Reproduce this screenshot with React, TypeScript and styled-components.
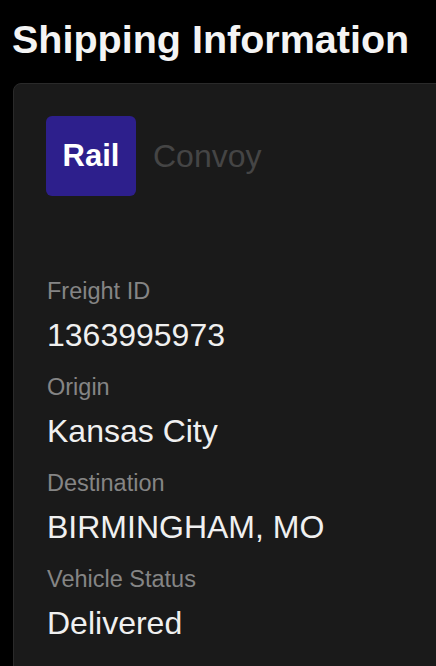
import React from 'react';
import styled, { createGlobalStyle } from 'styled-components';

const GlobalStyle = createGlobalStyle`
  html, body {
    margin: 0;
    padding: 0;
    background: #000;
    font-family: "Liberation Sans", Arial, sans-serif;
  }
  * { box-sizing: border-box; }
`;

const Page = styled.div`
  width: 436px;
  height: 666px;
  overflow: hidden;
  background: #000;
  padding: 0 0 0 13px;
`;

const Title = styled.h1`
  margin: 0;
  padding: 16px 0 0 0;
  margin-left: -1px;
  font-size: 39.5px;
  line-height: 46px;
  font-weight: 700;
  color: #f4f4f4;
  white-space: nowrap;
`;

const Card = styled.div`
  margin-top: 21px;
  margin-right: -20px;
  background: #1a1a1a;
  border: 1px solid #2a2a2a;
  border-radius: 8px 0 0 0;
  padding: 32px 0 120px 32px;
`;

const Header = styled.div`
  display: flex;
  align-items: center;
  gap: 17px;
`;

const Badge = styled.div`
  width: 90px;
  height: 80px;
  border-radius: 6px;
  background: #2d1f8c;
  display: flex;
  align-items: center;
  justify-content: center;
  color: #fff;
  font-weight: 700;
  font-size: 31px;
`;

const Carrier = styled.span`
  color: #454545;
  font-size: 32px;
`;

const Fields = styled.div`
  margin-top: 81px;
  display: flex;
  flex-direction: column;
`;

const Label = styled.div`
  color: #858585;
  font-size: 23.5px;
  line-height: 28px;
  margin-left: 1px;
`;

const Value = styled.div`
  color: #f0f0f0;
  font-size: 32px;
  line-height: 36px;
  margin: 12px 0 20px 1px;
`;

const fields = [
  { label: 'Freight ID', value: '1363995973' },
  { label: 'Origin', value: 'Kansas City' },
  { label: 'Destination', value: 'BIRMINGHAM, MO' },
  { label: 'Vehicle Status', value: 'Delivered' },
];

export default function App() {
  return (
    <>
      <GlobalStyle />
      <Page>
        <Title>Shipping Information</Title>
        <Card>
          <Header>
            <Badge>Rail</Badge>
            <Carrier>Convoy</Carrier>
          </Header>
          <Fields>
            {fields.map(f => (
              <React.Fragment key={f.label}>
                <Label>{f.label}</Label>
                <Value>{f.value}</Value>
              </React.Fragment>
            ))}
          </Fields>
        </Card>
      </Page>
    </>
  );
}
